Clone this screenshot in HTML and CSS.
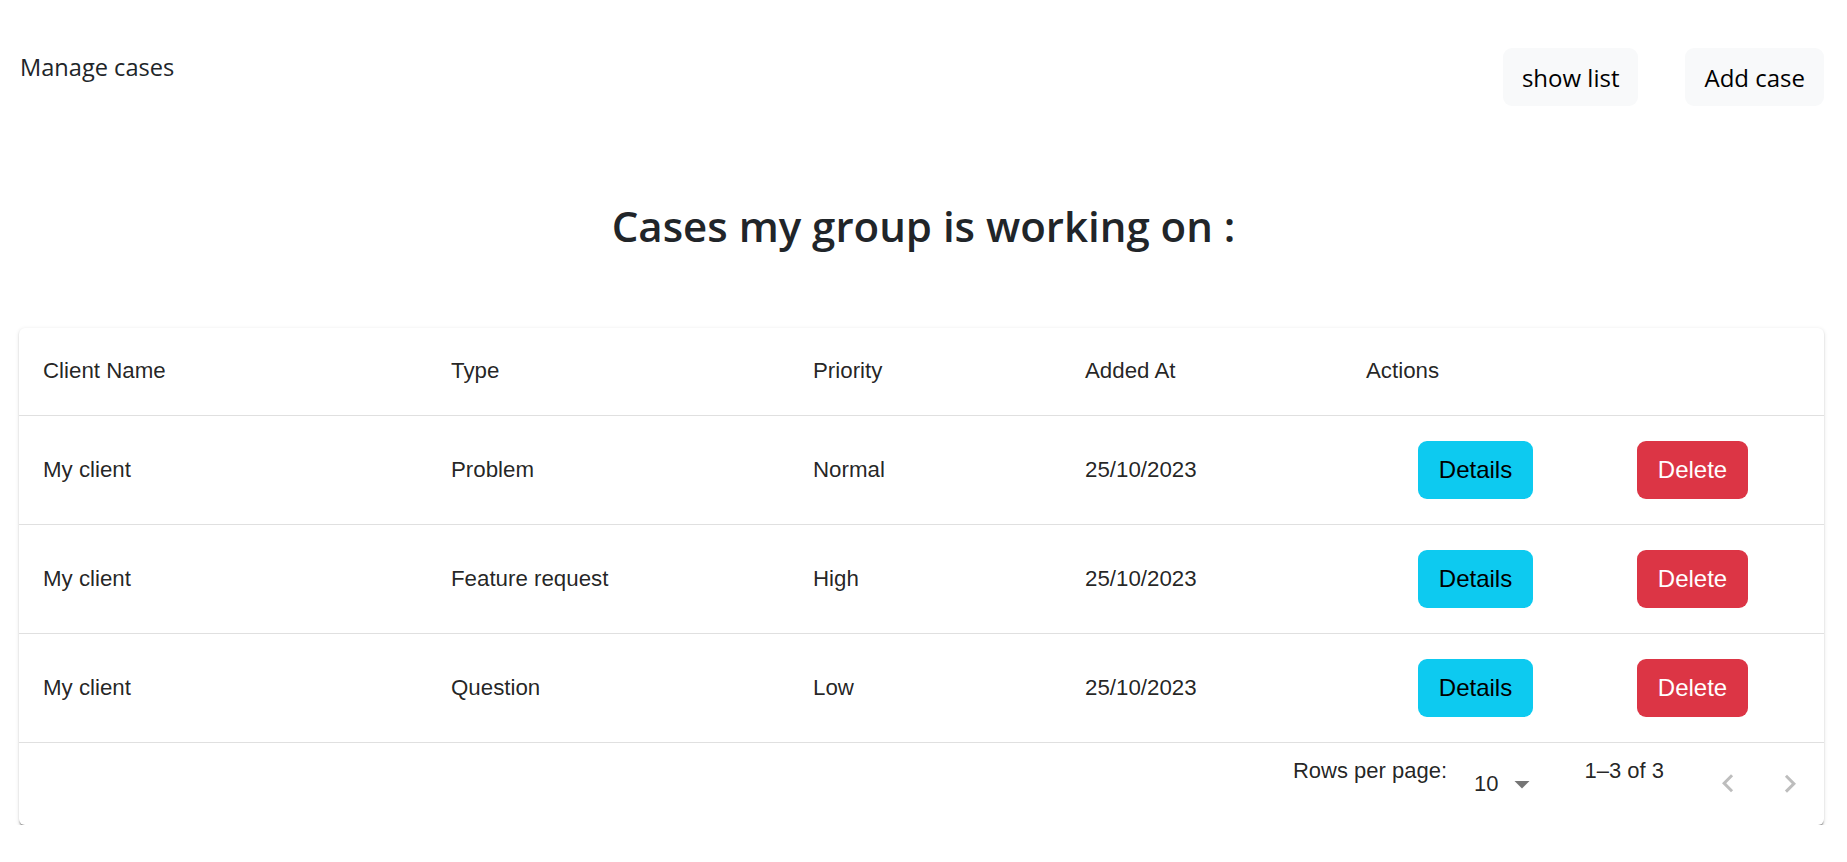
FILE: index.html
```html
<!DOCTYPE html>
<html lang="en">
<head>
<meta charset="utf-8">
<title>Manage cases</title>
<link rel="stylesheet" href="styles.css">
</head>
<body>
<header class="topbar">
  <div class="brand">Manage cases</div>
  <div class="top-actions">
    <button class="btn-light">show list</button>
    <button class="btn-light">Add case</button>
  </div>
</header>

<h2 class="title">Cases my group is working on :</h2>

<div class="card">
  <table class="cases">
    <colgroup>
      <col class="c1"><col class="c2"><col class="c3"><col class="c4"><col class="c5">
    </colgroup>
    <thead>
      <tr><th>Client Name</th><th>Type</th><th>Priority</th><th>Added At</th><th>Actions</th></tr>
    </thead>
    <tbody>
      <tr>
        <td>My client</td><td>Problem</td><td>Normal</td><td>25/10/2023</td>
        <td><div class="acts"><button class="btn btn-info">Details</button><button class="btn btn-danger">Delete</button></div></td>
      </tr>
      <tr>
        <td>My client</td><td>Feature request</td><td>High</td><td>25/10/2023</td>
        <td><div class="acts"><button class="btn btn-info">Details</button><button class="btn btn-danger">Delete</button></div></td>
      </tr>
      <tr>
        <td>My client</td><td>Question</td><td>Low</td><td>25/10/2023</td>
        <td><div class="acts"><button class="btn btn-info">Details</button><button class="btn btn-danger">Delete</button></div></td>
      </tr>
    </tbody>
  </table>
  <div class="pager">
    <p class="pager-label">Rows per page:</p>
    <div class="pager-select">
      <span>10</span>
      <svg class="drop" viewBox="0 0 24 24" width="36" height="36"><path d="M7 10l5 5 5-5z"/></svg>
    </div>
    <p class="pager-label pager-count">1–3 of 3</p>
    <div class="pager-nav">
      <svg class="nav-ic" viewBox="0 0 24 24" width="36" height="36"><path d="M15.41 16.09l-4.58-4.59 4.58-4.59L14 5.5l-6 6 6 6z"/></svg>
      <svg class="nav-ic" viewBox="0 0 24 24" width="36" height="36"><path d="M8.59 16.34l4.58-4.59-4.58-4.59L10 5.75l6 6-6 6z"/></svg>
    </div>
  </div>
</div>
</body>
</html>
```

FILE: styles.css
```css
* { box-sizing: border-box; }

body {
  margin: 0;
  background: #fff;
  color: #212529;
  font-family: "Open Sans", "Noto Sans", sans-serif;
}

.topbar {
  display: flex;
  justify-content: space-between;
  align-items: flex-start;
  padding: 48px 23px 0 20px;
}

.brand {
  font-size: 23.6px;
  line-height: 38px;
  color: #212529;
}

.top-actions {
  display: flex;
  gap: 47px;
}

.btn-light {
  height: 58px;
  padding: 0 19px;
  border: 0;
  border-radius: 9px;
  background: #f8f9fa;
  color: #000;
  font-family: "Open Sans", "Noto Sans", sans-serif;
  font-size: 24px;
}

.title {
  margin: 90px 0 0;
  text-align: center;
  font-size: 42px;
  line-height: 60px;
  font-weight: 600;
  color: #212529;
}

.card {
  margin: 72px 23px 0 19px;
  background: #fff;
  border-radius: 6px;
  box-shadow: 0 3px 1.5px -1.5px rgba(0,0,0,0.25), 0 1.5px 1.5px 0 rgba(0,0,0,0.14), 0 1.5px 4.5px 0 rgba(0,0,0,0.12);
  font-family: "Liberation Sans", Arial, sans-serif;
  color: rgba(0,0,0,0.87);
}

.cases {
  width: 100%;
  border-collapse: collapse;
  table-layout: fixed;
  font-size: 22.3px;
}

.c1 { width: 408px; }
.c2 { width: 362px; }
.c3 { width: 272px; }
.c4 { width: 281px; }

.cases th {
  height: 87px;
  padding: 0 24px;
  text-align: left;
  font-weight: 400;
  border-bottom: 1px solid #e0e0e0;
}

.cases td {
  height: 109px;
  padding: 0 24px;
  border-bottom: 1px solid #e0e0e0;
}

.acts {
  display: flex;
  justify-content: space-around;
  align-items: center;
}

.btn {
  height: 58px;
  padding: 0 21px;
  border: 0;
  border-radius: 9px;
  font-family: "Liberation Sans", Arial, sans-serif;
  font-size: 24px;
}

.btn-info { background: #0dcaf0; color: #000; }
.btn-danger { background: #dc3545; color: #fff; }

.pager {
  display: flex;
  justify-content: flex-end;
  align-items: center;
  height: 82px;
  padding-right: 16px;
  font-size: 22px;
}

.pager-label {
  margin: 0 0 26px;
}

.pager-select {
  display: flex;
  align-items: center;
  margin: 0 44px 0 27px;
}

.pager-select span { margin-right: 6px; }

.drop { fill: rgba(0,0,0,0.54); }

.pager-nav {
  display: flex;
  gap: 26px;
  margin-left: 46px;
}

.nav-ic { fill: rgba(0,0,0,0.26); }
```
